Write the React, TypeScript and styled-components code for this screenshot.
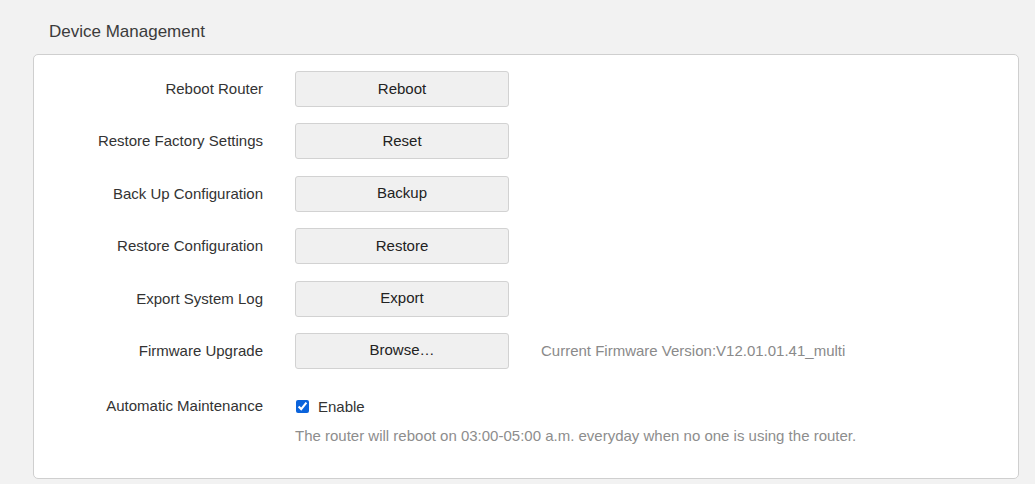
import styled, { createGlobalStyle } from "styled-components";

const GlobalStyle = createGlobalStyle`
  html, body {
    margin: 0;
    padding: 0;
    background: #f2f2f2;
    font-family: "Liberation Sans", Arial, sans-serif;
  }
`;

const Page = styled.div`
  width: 1035px;
  height: 484px;
  overflow: hidden;
  padding-top: 20px;
  box-sizing: border-box;
`;

const Title = styled.h2`
  margin: 0 0 10px 49px;
  font-size: 17px;
  font-weight: normal;
  line-height: 24px;
  color: #3b3b3b;
`;

const Card = styled.div`
  margin-left: 33px;
  width: 986px;
  box-sizing: border-box;
  background: #fff;
  border: 1px solid #cfcfcf;
  border-radius: 5px;
  padding: 16px 0 31px;
  display: flex;
  flex-direction: column;
  gap: 16.4px;
`;

const Row = styled.div<{ $top?: number; $align?: string }>`
  display: flex;
  align-items: ${(p) => p.$align ?? "center"};
  margin-top: ${(p) => p.$top ?? 0}px;
`;

const Label = styled.div`
  width: 229px;
  margin-right: 32px;
  text-align: right;
  font-size: 15px;
  line-height: 22px;
  color: #333;
  flex-shrink: 0;
`;

const ActionButton = styled.button`
  width: 214px;
  height: 36px;
  box-sizing: border-box;
  border: 1px solid #d2d2d2;
  border-radius: 3px;
  background: #f0f0f0;
  font-family: inherit;
  font-size: 15px;
  color: #222;
  padding: 0;
  padding-bottom: 2px;
  cursor: pointer;
`;

const Note = styled.span`
  margin-left: 32px;
  font-size: 15px;
  color: #8a8a8a;
`;

const ControlColumn = styled.div`
  display: flex;
  flex-direction: column;
  gap: 8px;
`;

const CheckLine = styled.label`
  display: flex;
  align-items: center;
  height: 22px;
  font-size: 15px;
  color: #333;
`;

const CheckBox = styled.input`
  width: 13px;
  height: 13px;
  margin: 0 9px 0 1px;
  accent-color: #0b63db;
`;

const Hint = styled.div`
  font-size: 15px;
  line-height: 22px;
  color: #8d8d8d;
`;

const actions = [
  { label: "Reboot Router", button: "Reboot" },
  { label: "Restore Factory Settings", button: "Reset" },
  { label: "Back Up Configuration", button: "Backup" },
  { label: "Restore Configuration", button: "Restore" },
  { label: "Export System Log", button: "Export" },
];

export default function App() {
  return (
    <Page>
      <GlobalStyle />
      <Title>Device Management</Title>
      <Card>
        {actions.map((a) => (
          <Row key={a.label}>
            <Label>{a.label}</Label>
            <ActionButton>{a.button}</ActionButton>
          </Row>
        ))}
        <Row>
          <Label>Firmware Upgrade</Label>
          <ActionButton>Browse…</ActionButton>
          <Note>Current Firmware Version:V12.01.01.41_multi</Note>
        </Row>
        <Row $top={10} $align="flex-start">
          <Label>Automatic Maintenance</Label>
          <ControlColumn>
            <CheckLine>
              <CheckBox type="checkbox" defaultChecked />
              Enable
            </CheckLine>
            <Hint>
              The router will reboot on 03:00-05:00 a.m. everyday when no one is
              using the router.
            </Hint>
          </ControlColumn>
        </Row>
      </Card>
    </Page>
  );
}
